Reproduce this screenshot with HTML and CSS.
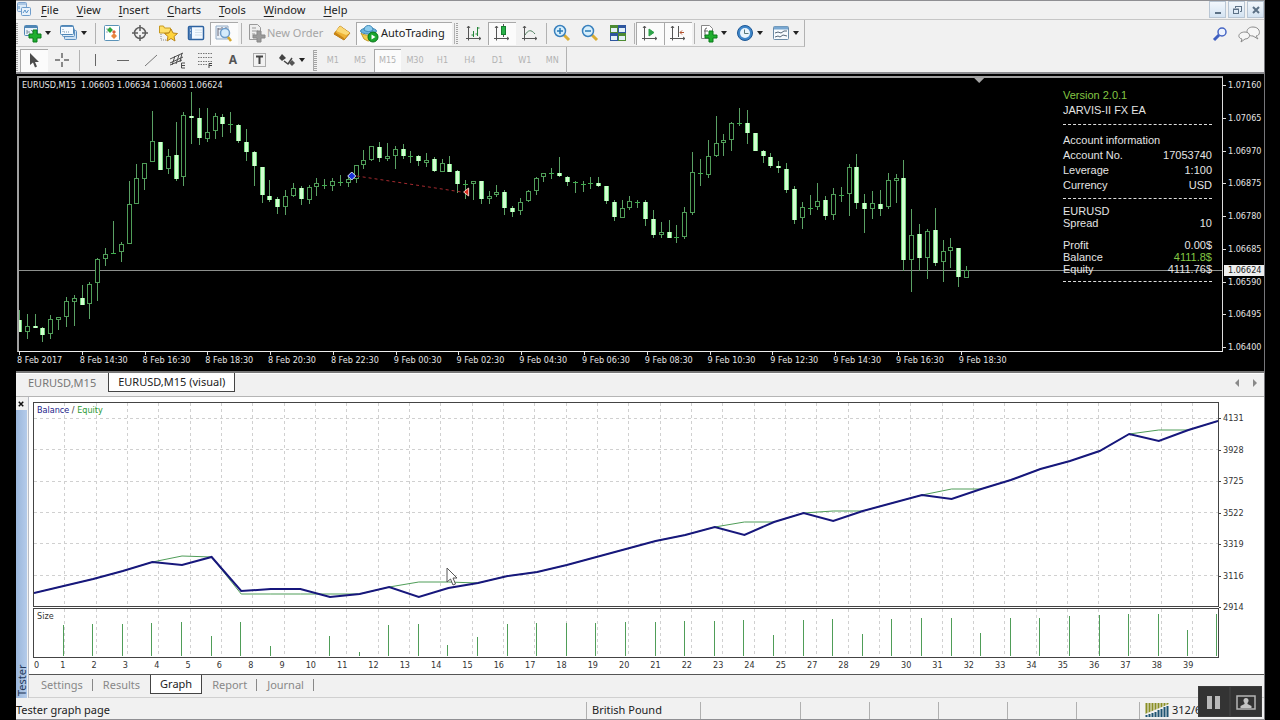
FILE: index.html
```html
<!DOCTYPE html>
<html lang="en">
<head>
<meta charset="utf-8">
<title>Strategy Tester - EURUSD,M15 (visual)</title>
<link rel="stylesheet" href="styles.css">
</head>
<body>
<div class="app">
  <header class="menubar">
    <svg class="app-icon" viewBox="0 0 16 16" aria-hidden="true"><rect x="1.500" y="1.500" width="9" height="9" rx="1" fill="#dcebf8" stroke="#7da3cf"/><path d="M2 3h8" stroke="#7da3cf"/><rect x="5.500" y="6.500" width="9" height="8" rx="1" fill="#e8f2fb" stroke="#6e9ccb"/><path d="M7 12l2-3 1.500 3 2-3M3 5v3" fill="none" stroke="#5b93c8"/></svg>
    <nav class="menus">
      <button class="menu"><u>F</u>ile</button><button class="menu"><u>V</u>iew</button><button class="menu"><u>I</u>nsert</button><button class="menu"><u>C</u>harts</button><button class="menu"><u>T</u>ools</button><button class="menu"><u>W</u>indow</button><button class="menu"><u>H</u>elp</button>
    </nav>
    <div class="window-buttons">
      <button class="winbtn" aria-label="Minimize"><svg viewBox="0 0 12 12"><path d="M3 9h6" stroke="#5c7186" stroke-width="2"/></svg></button>
      <button class="winbtn" aria-label="Restore"><svg viewBox="0 0 12 12" fill="none" stroke="#5c7186"><path d="M4.500 4V2.500h6v5H9M4 2.500h7"/><rect x="2.500" y="5.500" width="5" height="4"/><path d="M2 5h6"/></svg></button>
      <button class="winbtn" aria-label="Close"><svg viewBox="0 0 12 12"><path d="M3 3l6 6M9 3l-6 6" stroke="#5c7186" stroke-width="2"/></svg></button>
    </div>
  </header>

  <div class="toolbar">
    <div class="bar bar-main">
      <span class="grip"></span>
      <button class="tool drop" aria-label="New chart"><svg viewBox="0 0 20 20"><rect x="1.500" y="2.500" width="13" height="10" rx="1" fill="#eaf3fb" stroke="#4f86b5"/><path d="M2 4h12" stroke="#4f86b5" stroke-width="2"/><path d="M4 7v4M4 9h3M8 7l2 2" stroke="#7d8f9e" fill="none"/><path d="M10 7h4v4h4v4h-4v4h-4v-4H6v-4h4z" fill="#1fae2f" stroke="#0b7a1a"/></svg></button>
      <button class="tool drop" aria-label="Profiles"><svg viewBox="0 0 20 20"><rect x="5.500" y="7.500" width="12" height="9" rx="1" fill="#cfe2f3" stroke="#5c8fc0"/><rect x="3.500" y="5.500" width="12" height="8" rx="1" fill="#dcebf8" stroke="#5c8fc0"/><rect x="1.500" y="2.500" width="13" height="9" rx="1" fill="#f5faff" stroke="#4f86b5"/><path d="M2 3.500h12" stroke="#5c8fc0"/><path d="M4 6v3h7" stroke="#7792aa" stroke-dasharray="1 1" fill="none"/></svg></button>
      <span class="sep"></span>
      <button class="tool" aria-label="Market Watch"><svg viewBox="0 0 20 20"><rect x="2.500" y="2.500" width="15" height="15" rx="1" fill="#fff" stroke="#5b93b8"/><path d="M4 6h2M4 9h2" stroke="#9ab"/><path d="M8 4l3 3-3 3-3-3z" fill="#2ea53b"/><path d="M12 7l2 2-2 2-2-2z" fill="#d9603c"/><path d="M12 10l3 3-3 3-3-3z" fill="#e9863e"/></svg></button>
      <button class="tool" aria-label="Data Window"><svg viewBox="0 0 20 20" fill="none" stroke="#5f5f5f"><circle cx="10" cy="10" r="5.500" stroke-width="1.500"/><path d="M10 2v6M10 12v6M2 10h6M12 10h6" stroke-width="1.500"/></svg></button>
      <button class="tool" aria-label="Navigator"><svg viewBox="0 0 20 20"><path d="M1.500 9V3h4l1 2h6v5h-11z" fill="#ffe06a" stroke="#c79a1e"/><path d="M3 11v6h5" fill="none" stroke="#888" stroke-dasharray="1 1"/><path d="M13 6l2 4 4.500.5-3.500 3 1 4.500-4-2.500L9 18l1-4.500-3.500-3L11 10z" fill="#ffd43c" stroke="#bb861b"/></svg></button>
      <button class="tool" aria-label="Terminal"><svg viewBox="0 0 20 20"><rect x="2.500" y="3.500" width="15" height="13" rx="1" fill="#f3f9ff" stroke="#2d62a0" stroke-width="1.500"/><path d="M3 4h3v12H3z" fill="#5180b8"/><path d="M9 7h7M9 9.500h7M9 12h7" stroke="#d2dfea"/><path d="M4 7h1M4 10h1" stroke="#fff"/></svg></button>
      <button class="tool pressed" aria-label="Strategy Tester"><svg viewBox="0 0 20 20"><path d="M2 3h12v13H2z" fill="#eaf1f8" stroke="#92abc5"/><path d="M4 5v8M4 6h3M8 4v6M12 4v4" stroke="#667"/><circle cx="11" cy="10" r="4.500" fill="#d5ebfb" stroke="#6e9cca" stroke-width="1.500"/><path d="M14 14l3 4" stroke="#d5a62b" stroke-width="2.500"/></svg></button>
      <span class="sep"></span>
      <button class="tool labelled order" disabled><svg viewBox="0 0 20 20"><path d="M3.500 1.500h8l3 3v12h-11z" fill="#eee" stroke="#999"/><path d="M6 5h4M6 8h6M6 11h3" stroke="#999"/><path d="M11 8h4v4h4v3h-4v4h-4v-4H7v-3h4z" fill="#9a9a9a" stroke="#888"/></svg>New Order</button>
      <button class="tool" aria-label="MetaEditor"><svg viewBox="0 0 20 20"><path d="M8 3l10 7-6 7L2 11z" fill="#eeb234" stroke="#b87913"/><path d="M8 3l10 7-4 2L4 8z" fill="#fbd975"/><path d="M2 11l10 6v-2L3 9" fill="#c98516"/></svg></button>
      <button class="tool labelled auto pressed"><svg viewBox="0 0 20 20"><path d="M2 10c3 3 12 3 15-1l-3 8-5 1-4-2z" fill="#f2ce4f" stroke="#c49a27"/><ellipse cx="9.500" cy="8" rx="8" ry="3" fill="#69b2dc" stroke="#3d87b6"/><path d="M5 7c0-6 9-6 9 0-2 2-7 2-9 0z" fill="#8bcbed" stroke="#3d87b6"/><circle cx="14" cy="14" r="5" fill="#1aa52d" stroke="#087319"/><path d="M12.500 11.500l4 2.500-4 2.500z" fill="#fff"/></svg>AutoTrading</button>
      <span class="sep tight"></span>
      <span class="grip"></span>
      <button class="tool" aria-label="Bar chart"><svg viewBox="0 0 20 20" fill="none" stroke="#555"><path d="M4.500 3v14.500M2 15.500h15M3 5l1.500-2L6 5M15 14l2 1.500-2 1.500"/><path d="M9.500 8v6M7.500 12h2M13.500 4v9M13.500 5h2M11.500 11h2" stroke="#26863a"/></svg></button>
      <button class="tool pressed" aria-label="Candlesticks"><svg viewBox="0 0 20 20" fill="none" stroke="#555"><path d="M4.500 3v14.500M2 15.500h15M3 5l1.500-2L6 5M15 14l2 1.500-2 1.500M11.500 1v13"/><rect x="9.500" y="3.500" width="4" height="8" fill="#29b149" stroke="#147e2d"/></svg></button>
      <button class="tool" aria-label="Line chart"><svg viewBox="0 0 20 20" fill="none" stroke="#555"><path d="M4.500 3v14.500M2 15.500h15M3 5l1.500-2L6 5M15 14l2 1.500-2 1.500"/><path d="M5 12c3-5 6-6 10-1" stroke="#4f8060"/></svg></button>
      <span class="sep tight"></span>
      <button class="tool" aria-label="Zoom in"><svg viewBox="0 0 20 20"><path d="M12 12l5 5" stroke="#d9ad35" stroke-width="3"/><circle cx="8" cy="8" r="5.500" fill="#d7effc" stroke="#3980bd" stroke-width="1.500"/><path d="M5 8h6M8 5v6" stroke="#287ab5" stroke-width="1.500"/></svg></button>
      <button class="tool" aria-label="Zoom out"><svg viewBox="0 0 20 20"><path d="M12 12l5 5" stroke="#d9ad35" stroke-width="3"/><circle cx="8" cy="8" r="5.500" fill="#d7effc" stroke="#3980bd" stroke-width="1.500"/><path d="M5 8h6" stroke="#287ab5" stroke-width="1.500"/></svg></button>
      <button class="tool" aria-label="Tile windows"><svg viewBox="0 0 20 20"><path d="M2 2h8v8H2zM10 10h8v8h-8z" fill="#4d8b32"/><path d="M10 2h8v8h-8zM2 10h8v8H2z" fill="#2e569e"/><path d="M3 5h6v4H3zM11 5h6v4h-6zM3 13h6v4H3zM11 13h6v4h-6z" fill="#e3f1f8"/></svg></button>
      <span class="sep tight"></span>
      <button class="tool pressed" aria-label="Auto scroll"><svg viewBox="0 0 20 20" fill="none" stroke="#555"><path d="M4.500 3v14.500M2 15.500h15M3 5l1.500-2L6 5M15 14l2 1.500-2 1.500"/><path d="M9 6l5 3.500L9 13z" fill="#2ea34a" stroke="#2ea34a"/></svg></button>
      <button class="tool pressed" aria-label="Chart shift"><svg viewBox="0 0 20 20" fill="none" stroke="#555"><path d="M4.500 3v14.500M2 15.500h15M3 5l1.500-2L6 5M15 14l2 1.500-2 1.500M10.500 3v11"/><path d="M16 9.500h-4M14 7.500l-2 2 2 2" stroke="#b3532f"/></svg></button>
      <span class="sep tight"></span>
      <button class="tool drop" aria-label="Indicators"><svg viewBox="0 0 20 20"><path d="M2.500 2.500h8l3 3v10h-11z" fill="#fff" stroke="#888"/><path d="M6 13V7q0-2 2-2M5 8h4" fill="none" stroke="#666"/><path d="M10 8h4v4h4v3h-4v4h-4v-4H6v-3h4z" fill="#1fae2f" stroke="#0b7a1a"/></svg></button>
      <button class="tool drop" aria-label="Periods"><svg viewBox="0 0 20 20"><circle cx="10" cy="10" r="7.500" fill="#3f87ca" stroke="#1e5896"/><circle cx="10" cy="10" r="5" fill="#e8f4fc"/><path d="M9.500 6.500v4h4" stroke="#577" fill="none"/></svg></button>
      <button class="tool drop" aria-label="Templates"><svg viewBox="0 0 20 20"><rect x="2.500" y="3.500" width="15" height="13" rx="1" fill="#f7fbfe" stroke="#6b8ba6"/><path d="M3 5h14" stroke="#79a8d2" stroke-width="3"/><path d="M4 10l3-1 3 1 3-2 3 0M4 14l3-1 2 1 3-2 4 1" fill="none" stroke="#567"/></svg></button>
    </div>
    <div class="bar bar-lines">
      <span class="grip"></span>
      <button class="tool pressed" aria-label="Cursor"><svg viewBox="0 0 20 20"><path d="M6 3v12l3-2.500 2 5 2-1-2-4.500h4z" fill="#4c4c4c"/></svg></button>
      <button class="tool" aria-label="Crosshair"><svg viewBox="0 0 20 20"><path d="M10 3v5M10 12v5M3 10h5M12 10h5" stroke="#666" stroke-width="1.500"/></svg></button>
      <span class="sep"></span>
      <div class="draw-tools">
        <button class="tool" aria-label="Vertical line"><svg viewBox="0 0 20 20"><path d="M9.500 4v12" stroke="#666"/></svg></button>
        <button class="tool" aria-label="Horizontal line"><svg viewBox="0 0 20 20"><path d="M4 10.500h12" stroke="#666"/></svg></button>
        <button class="tool" aria-label="Trendline"><svg viewBox="0 0 20 20"><path d="M4 16L16 5" stroke="#777"/></svg></button>
        <button class="tool" aria-label="Equidistant channel"><svg viewBox="0 0 20 20" fill="none" stroke="#4e4e4e"><path d="M2 13L15 7M2 9l13-6M4 15l3-9M8 14l3-9M12 12l2-9M2 15l12-5"/><path d="M17 13h-3.500v5H17M14 15.500h3"/></svg></button>
        <button class="tool" aria-label="Fibonacci retracement"><svg viewBox="0 0 20 20" fill="none" stroke="#777"><path d="M3 3.500h14M3 7.500h14M3 11.500h14M3 14.500h9" stroke-dasharray="1.500 1"/><path d="M17 13.500h-3V18M14 15.500h3" stroke="#444"/></svg></button>
        <button class="tool glyph" aria-label="Text">A</button>
        <button class="tool" aria-label="Text label"><svg viewBox="0 0 20 20" fill="none" stroke="#666"><rect x="3.500" y="3.500" width="12" height="13" stroke-dasharray="1 1"/><path d="M6 6.500h7M9.500 6v8" stroke="#444" stroke-width="2"/></svg></button>
      </div>
      <button class="tool drop" aria-label="Arrows"><svg viewBox="0 0 20 20"><path d="M5 4l4 4-4 3-3-3z" fill="#444"/><path d="M7 11l4 3 4-6" fill="none" stroke="#444" stroke-width="1.500"/><path d="M15 10l3 3-3 3-3-3z" fill="#555"/></svg></button>
      <span class="grip wide"></span>
      <div class="periods">
        <button class="tool">M1</button><button class="tool">M5</button><button class="tool pressed">M15</button><button class="tool">M30</button><button class="tool">H1</button><button class="tool">H4</button><button class="tool">D1</button><button class="tool">W1</button><button class="tool">MN</button>
      </div>
    </div>
    <div class="toolbar-right">
      <button class="tool" aria-label="Search"><svg viewBox="0 0 20 20"><circle cx="12" cy="8" r="4" fill="#eef4ff" stroke="#4666c4" stroke-width="1.500"/><path d="M9 11l-5 5" stroke="#3f5fc1" stroke-width="3"/></svg></button>
      <button class="tool chat" aria-label="Community"><svg viewBox="0 0 24 20" fill="#f6f6f6" stroke="#8b8b8b"><path d="M16 3c8 0 8 9 3 9l2 3-5-3c-8 0-8-9 0-9z"/><path d="M8 8c6 0 6 7 0 7l-4 3 1-3c-5-1-4-7 3-7z"/></svg></button>
    </div>
  </div>

  <main class="price">
    <div class="plot price-plot">
      <svg class="canvas" id="price-chart" role="img" aria-label="EURUSD M15 candlestick chart"></svg>
      <p class="ohlc">EURUSD,M15&nbsp; 1.06603 1.06634 1.06603 1.06624</p>
      <div class="info">
        <p class="lime">Version 2.0.1</p>
        <p>JARVIS-II FX EA</p>
        <hr>
        <p>Account information</p>
        <dl>
          <div><dt>Account No.</dt><dd>17053740</dd></div>
          <div><dt>Leverage</dt><dd>1:100</dd></div>
          <div><dt>Currency</dt><dd>USD</dd></div>
        </dl>
        <hr class="second">
        <dl class="tight">
          <div><dt>EURUSD</dt></div>
          <div class="gap"><dt>Spread</dt><dd>10</dd></div>
          <div><dt>Profit</dt><dd>0.00$</dd></div>
          <div><dt>Balance</dt><dd class="lime">4111.8$</dd></div>
          <div><dt>Equity</dt><dd>4111.76$</dd></div>
        </dl>
        <hr class="last">
      </div>
    </div>
    <div class="price-axis">
      <span>1.07160</span><span>1.07065</span><span>1.06970</span><span>1.06875</span><span>1.06780</span><span>1.06685</span><span>1.06590</span><span>1.06495</span><span>1.06400</span>
      <b class="bid">1.06624</b>
    </div>
    <div class="time-axis">
      <span>8 Feb 2017</span><span>8 Feb 14:30</span><span>8 Feb 16:30</span><span>8 Feb 18:30</span><span>8 Feb 20:30</span><span>8 Feb 22:30</span><span>9 Feb 00:30</span><span>9 Feb 02:30</span><span>9 Feb 04:30</span><span>9 Feb 06:30</span><span>9 Feb 08:30</span><span>9 Feb 10:30</span><span>9 Feb 12:30</span><span>9 Feb 14:30</span><span>9 Feb 16:30</span><span>9 Feb 18:30</span>
    </div>
  </main>

  <nav class="chart-tabs">
    <button class="tab">EURUSD,M15</button><button class="tab active">EURUSD,M15 (visual)</button>
    <div class="scrollers"><button aria-label="Scroll left"><svg viewBox="0 0 8 8"><path d="M6 0v8L2 4z" fill="#8a8a8a"/></svg></button><button aria-label="Scroll right"><svg viewBox="0 0 8 8"><path d="M2 0v8l4-4z" fill="#8a8a8a"/></svg></button></div>
  </nav>

  <section class="tester">
    <aside class="side">
      <button class="close" aria-label="Close tester"><svg viewBox="0 0 8 8"><path d="M1 1l6 6M7 1L1 7" stroke="#111" stroke-width="2"/></svg></button>
      <h2 class="side-title">Tester</h2>
    </aside>
    <div class="tester-main">
      <div class="graph">
        <div class="plot balance-plot">
          <svg class="canvas" id="balance-chart" role="img" aria-label="Balance and equity graph"></svg>
          <p class="legend"><span class="navy">Balance</span> / <span class="green">Equity</span></p>
        </div>
        <div class="value-axis"><span>4131</span><span>3928</span><span>3725</span><span>3522</span><span>3319</span><span>3116</span><span>2914</span></div>
        <div class="plot size-plot">
          <svg class="canvas" id="size-chart" role="img" aria-label="Trade size"></svg>
          <p class="legend">Size</p>
        </div>
        <div class="trade-axis" id="trade-axis"></div>
      </div>
      <nav class="tester-tabs">
        <button class="ttab">Settings</button><button class="ttab">Results</button><button class="ttab active">Graph</button><button class="ttab">Report</button><button class="ttab">Journal</button>
      </nav>
    </div>
  </section>

  <footer class="status">
    <span class="cell page">Tester graph page</span>
    <span class="cell profile">British Pound</span>
    <span class="cell c1"></span><span class="cell c2"></span><span class="cell c2"></span><span class="cell c2"></span><span class="cell c2"></span><span class="cell c3"></span>
    <span class="cell traffic"><svg viewBox="0 0 24 14" aria-hidden="true"><path d="M1.500 0v13M4.500 0v13M7.500 0v13M10.500 0v13M13.500 0v13M16.500 0v13M19.500 0v13M22.500 0v13" stroke="#8a8f25" stroke-width="2"/><path d="M0 11L24 1v13H0z" fill="#f0f0f0"/><path d="M1.500 12v2M4.500 11v3M7.500 10v4M10.500 9v5M13.500 7v7M16.500 6v8M19.500 4v10M22.500 3v11" stroke="#1f5573" stroke-width="2"/></svg>312/6</span>
  </footer>
</div>

<svg class="pointer" viewBox="0 0 12 19" aria-hidden="true"><path d="M1 1v14l3.500-3 2.500 6 2.500-1L7 11h4z" fill="#fff" stroke="#555"/></svg>
<div class="recorder">
  <button aria-label="Pause"><svg viewBox="0 0 20 20"><path d="M3 4h5v13H3zM11 4h5v13h-5z" fill="#b9b9b9"/></svg></button>
  <button aria-label="Webcam"><svg viewBox="0 0 20 20"><rect x="1" y="4" width="18" height="13" fill="none" stroke="#b5b5b5" stroke-width="1.500"/><circle cx="10" cy="8.500" r="2.500" fill="#c4c4c4"/><path d="M8.500 10h3v2l4 2v2h-11v-2l4-2z" fill="#c4c4c4"/></svg></button>
</div>
<script src="charts.js"></script>
</body>
</html>
```
FILE: styles.css
```css
* { box-sizing: border-box; }
body {
  margin: 0;
  min-height: 100vh;
  padding: 0 15px 0 16px;
  background: #000;
  color: #222;
  font: 11px/16px "Noto Sans", "Open Sans", sans-serif;
}
p, dl, dd, h2 { margin: 0; font-weight: normal; }
button { margin: 0; padding: 0; border: 0; background: none; color: inherit; font: inherit; }
svg { display: block; }

.app {
  min-height: 100vh;
  display: flex;
  flex-direction: column;
  background: #f1f1f1;
  border-top: 1px solid #8f8f93;
  border-right: 1px solid #77777b;
  border-bottom: 1px solid #8f8f93;
}

/* menu */
.menubar { display: flex; align-items: stretch; height: 19px; border-bottom: 1px solid #c6c6c6; }
.app-icon { width: 16px; height: 16px; }
.menus { display: flex; flex: 1; }
.menu { padding: 0 9px; }
.menu u { text-underline-offset: 2px; }
.window-buttons { display: flex; gap: 2px; padding-bottom: 1px; }
.winbtn { width: 17px; display: grid; place-items: center; border: 1px solid #b9c6d4; background: linear-gradient(#f2f7fc, #d4e3f2); }
.winbtn svg { width: 12px; height: 12px; }

/* toolbars */
.toolbar { position: relative; height: 54px; border-bottom: 2px solid #8b8b8f; }
.bar { display: flex; align-items: center; width: max-content; height: 27px; border-right: 1px solid #b2b2b2; border-bottom: 1px solid #c2c2c2; }
.bar-lines { height: 26px; border-bottom: 0; }
.grip { width: 4px; height: 21px; flex: none; background: repeating-linear-gradient(#a4a4a4 0 1px, #f1f1f1 1px 2px); border-right: 2px solid #f1f1f1; }
.grip.wide { width: 6px; margin-left: 3px; border-left: 1px solid #aaa; }
.sep { width: 6px; height: 21px; flex: none; background: linear-gradient(#b2b2b2, #b2b2b2) 50% 0 / 1px 100% no-repeat; }
.sep.tight { width: 4px; }
.tool { width: 28px; height: 23px; flex: none; display: flex; align-items: center; justify-content: center; }
.tool svg { width: 20px; height: 20px; flex: none; }
.tool.pressed { background: #fbfbfb; box-shadow: inset 1px 1px #a9a9a9; }
.tool.drop { width: 36px; padding-left: 3px; justify-content: flex-start; }
.tool.drop::after { content: ""; margin-left: 2px; border: 3px solid transparent; border-top: 4px solid #222; border-bottom: 0; }
.tool.labelled { justify-content: flex-start; gap: 1px; white-space: nowrap; }
.order { width: 84px; padding-left: 2px; color: #a5a5a5; }
.auto { width: 96px; padding-left: 3px; }
.auto.labelled { gap: 2px; }
.draw-tools { display: flex; width: 192px; }
.draw-tools .tool { flex: 1; }
.glyph { color: #555; font-size: 12px; font-weight: bold; }
.periods { display: flex; width: 247px; }
.periods .tool { flex: 1; color: #b3b3b3; font: 9px/12px "DejaVu Sans Condensed", sans-serif; }
.toolbar-right { position: absolute; right: 0; top: 2px; display: flex; }
.toolbar-right .chat { width: 30px; }
.toolbar-right .chat svg { width: 24px; }

/* price chart */
.price {
  flex: 1;
  min-height: 240px;
  display: grid;
  grid-template: 1fr 19px / 1fr 41px;
  padding-top: 2px;
  background: #000;
  color: #e4e4e4;
  font: 9px/14px "DejaVu Sans Condensed", "Noto Sans", sans-serif;
}
.plot { position: relative; min-width: 0; }
.canvas { position: absolute; inset: 0; width: 100%; height: 100%; }
.price-plot { margin-left: 1px; border: 2px solid #a0a0a0; border-right: 1px solid #ddd; border-bottom: 1px solid #eee; }
.ohlc { position: absolute; left: 3px; top: 0; }
.price-axis { grid-row: 1 / 3; grid-column: 2; position: relative; display: flex; flex-direction: column; justify-content: space-between; padding: 2px 0 17px; }
.price-axis span { padding-left: 5px; position: relative; }
.price-axis span::before { content: ""; position: absolute; left: 0; top: 7px; width: 3px; height: 1px; background: #ddd; }
.bid { position: absolute; left: 1px; right: 0; top: 64%; padding-left: 4px; background: #eee; color: #222; font-weight: normal; line-height: 11px; }
.time-axis { grid-row: 2; grid-column: 1; display: grid; grid-template-columns: repeat(16, 100fr) 321fr; padding-left: 1px; }
.time-axis span { position: relative; white-space: nowrap; padding-top: 1px; }
.time-axis span::before { content: ""; position: absolute; left: 2px; top: 0; width: 1px; height: 3px; background: #ddd; }

.info { position: absolute; right: 10px; top: 10px; width: 149px; font: 11px/15px "Liberation Sans", Arial, sans-serif; }
.info hr { height: 0; margin: 6px 0 8px; border: 0; border-top: 1px dashed #ddd; }
.info .second { margin: 5px 0 6px; }
.info .last { margin: 6px 0 0; }
.info dl div { display: flex; justify-content: space-between; }
.info .tight { line-height: 12px; }
.info .tight .gap { margin-bottom: 10px; }
.info .lime { color: #84c744; }

/* chart tabs */
.chart-tabs { display: flex; height: 26px; align-items: flex-start; border-top: 2px solid #777; border-bottom: 1px solid #b5b5b5; box-shadow: inset 0 1px #fff; }
.tab { height: 19px; padding: 0 12px; color: #777; }
.tab.active { background: #fff; color: #222; padding: 0 9px; border: 1px solid #444; border-top: 0; }
.scrollers { margin-left: auto; display: flex; gap: 10px; padding: 6px 5px; }
.scrollers svg { width: 8px; height: 8px; }

/* tester */
.tester { display: flex; background: #fff; }
.side { width: 13px; flex: none; display: flex; flex-direction: column; border-right: 1px solid #b9bcc4; background: #f1f1f1; }
.close { height: 13px; display: grid; place-items: center; width: 9px; }
.close svg { width: 6px; height: 6px; }
.side-title { flex: 1; width: 11px; background: linear-gradient(90deg, #b4cbea, #9ab6db); writing-mode: vertical-rl; transform: rotate(180deg); font-size: 11px; line-height: 11px; color: #24395a; padding-top: 2px; }
.tester-main { flex: 1; min-width: 0; }
.graph {
  display: grid;
  grid-template: 206px 50px 16px / 1fr 45px;
  padding: 5px 0 0 4px;
  background: #fff;
  border-bottom: 1px solid #555;
  color: #333;
  font: 9px/14px "DejaVu Sans Condensed", "Noto Sans", sans-serif;
}
.graph .plot { grid-column: 1; border: 1px solid #444; }
.graph .balance-plot { margin-bottom: 1px; }
.legend { position: absolute; left: 3px; top: 0; }
.navy { color: #1c1c8a; }
.green { color: #2c9a35; }
.value-axis { grid-column: 2; grid-row: 1; display: flex; flex-direction: column; justify-content: space-between; margin: 9px 0 -6px; }
.value-axis span { position: relative; padding-left: 4px; }
.value-axis span::before { content: ""; position: absolute; left: 0; top: 7px; width: 2px; height: 1px; background: #444; }
.trade-axis { grid-column: 1; display: grid; grid-template-columns: repeat(37, 94fr) 74fr; padding: 0 1px; }
.trade-axis span { display: flex; justify-content: flex-end; }
.trade-axis .first { justify-content: space-between; }
.tester-tabs { display: flex; height: 23px; padding-left: 2px; align-items: flex-start; background: #f1f1f1; border-bottom: 1px solid #d0d0d0; }
.ttab { position: relative; height: 19px; padding: 0 10px; color: #888; }
.ttab:not(.active)::after { content: ""; position: absolute; right: 0; top: 4px; height: 12px; width: 1px; background: #888; }
.ttab:has(+ .active)::after { display: none; }
.ttab.active { padding: 0 9px; border: 1px solid #444; border-top: 0; background: #fff; color: #222; }

/* status bar */
.status { display: flex; height: 21px; padding-top: 4px; overflow: hidden; white-space: nowrap; }
.cell { flex: none; height: 17px; padding-left: 5px; border-left: 1px solid #b0b0b0; }
.cell.page { flex: 1; padding: 0; border: 0; }
.profile { width: 114px; }
.c1 { width: 100px; }
.c2 { width: 69px; }
.c3 { width: 63px; }
.traffic { width: 125px; display: flex; gap: 3px; }
.traffic svg { width: 24px; height: 14px; margin-top: 1px; }

/* overlays */
.pointer { position: absolute; left: 446px; top: 567px; width: 12px; height: 19px; }
.recorder { position: fixed; right: 18px; bottom: 3px; display: flex; background: #333; }
.recorder button { width: 32px; height: 31px; display: grid; place-items: center; border: 1px solid #3d3d3d; }
.recorder svg { width: 20px; height: 20px; }
```
FILE: charts.js
```js
// Candles: [high, body top, body bottom, low, kind]; f = falling, h = rising, d = doji.
// Levels run downwards on a scale of 822 units, starting at -9.
const candles = `690,720,757,757,f 703,739,757,778,h 703,738,744,744,f 740,745,766,786,f 706,718,763,778,h 712,712,718,750,h
650,664,712,742,h 646,653,665,738,h 614,654,675,675,f 606,612,673,716,h 533,538,609,662,h 503,523,538,557,h 423,519,521,523,d
485,491,517,545,h 303,371,493,493,h 252,295,371,371,h 248,248,296,330,h 92,182,247,247,h 185,185,269,269,f 208,227,268,281,h
127,224,296,302,f 95,106,292,319,h 36,107,114,193,f 85,113,175,196,f 85,157,176,185,h 98,109,154,176,h 102,110,133,170,f
95,131,133,160,d 131,134,184,188,f 148,186,215,243,f 212,216,259,317,f 260,260,346,369,f 300,348,359,365,f 352,357,380,401,f
330,347,381,404,h 309,324,348,352,h 318,325,356,374,f 314,322,361,372,h 295,309,322,348,h 297,314,316,328,d 295,304,317,333,h
285,306,308,318,d 290,297,308,320,h 254,254,297,309,h 211,239,255,266,h 198,198,240,242,h 186,200,234,245,f 188,228,235,243,h
197,207,229,266,h 192,207,229,238,f 212,228,230,250,d 225,229,243,258,f 218,240,245,260,h 230,238,273,276,f 236,249,275,277,h
227,251,276,277,f 270,273,312,338,f 300,311,313,358,d 304,304,311,360,h 302,304,357,371,f 333,347,358,371,h 316,337,346,352,h
330,336,384,404,f 378,384,395,412,f 353,365,394,404,h 331,333,364,366,h 290,295,333,346,h 278,278,292,305,h 265,278,280,298,d
232,279,289,292,f 287,290,306,319,f 303,306,308,338,d 303,311,313,337,d 292,310,312,328,d 292,309,318,320,f 317,319,363,371,f
360,366,412,424,f 360,383,413,413,h 348,364,383,390,h 360,366,368,384,d 360,366,418,438,f 391,418,466,475,f 427,457,466,474,h
421,457,474,475,f 436,471,473,490,d 382,397,472,477,h 215,277,399,406,h 236,279,282,318,d 180,229,285,293,h 107,188,228,230,h
162,181,190,228,h 127,130,181,213,h 83,129,131,138,d 91,128,160,193,f 160,160,213,213,f 210,213,228,248,f 218,230,257,264,f
243,257,265,278,f 248,268,329,338,f 318,327,419,431,f 367,381,415,446,h 346,383,385,405,d 308,363,381,390,h 347,359,407,419,f
325,342,406,420,h 320,344,346,367,d 253,260,343,407,h 223,260,370,388,f 343,368,388,459,f 334,368,388,416,h 329,371,386,407,f
280,301,382,387,h 281,294,304,368,h 241,293,539,574,f 388,466,541,636,h 432,462,533,574,f 446,453,533,597,h 385,451,548,558,f
481,512,547,605,h 473,500,513,563,h 503,503,592,622,f 559,571,593,593,h`.trim().split(/\s+/).map(c => c.split(','));

// Graph levels measured down from the top of a 203-unit panel.
const balance = [190, 183, 176, 168, 159, 162, 154, 188, 186, 186, 194, 191, 184, 194, 185, 180, 173, 169, 162, 154, 146, 138, 132, 124, 132, 119, 110, 118, 108, 100, 92, 96, 86, 77, 66, 58, 48, 31, 38, 27, 18];
const equityOnly = { 5: 153, 7: 191, 8: 191, 9: 191, 10: 191, 11: 191, 13: 179, 14: 179, 24: 119, 25: 119, 27: 108, 31: 86, 38: 27 };
const equity = balance.map((v, i) => equityOnly[i] ?? v);
const sizes = [0, 31, 32, 32, 33, 34, 20, 34, 10, 0, 20, 4, 31, 32, 11, 19, 32, 33, 33, 33, 34, 34, 35, 35, 36, 21, 36, 37, 22, 37, 38, 38, 23, 38, 38, 40, 41, 42, 42, 26, 42];

const line = (x1, y1, x2, y2, attrs) => `<path d="M${x1} ${y1}L${x2} ${y2}" fill="none" ${attrs}/>`;
const size = svg => [svg.clientWidth, svg.clientHeight];

function drawPrice() {
  const svg = document.getElementById('price-chart');
  const [w, h] = size(svg);
  const X = v => v * w / 1204;
  const Y = v => Math.round((Number(v) + 6) * h / 819);
  let out = line(0, Y(571) + .5, w, Y(571) + .5, 'stroke="#8c8f8c"');
  candles.forEach(([hi, top, bottom, low, kind], i) => {
    const x = Math.round(X(i * 47 / 6));
    const c = x + .5, t = Y(top), b = Math.max(Y(bottom), t + 1);
    out += line(c, Y(hi), c, t, 'stroke="#5aa164"') + line(c, b, c, Y(low), 'stroke="#5aa164"');
    if (kind === 'd') out += `<rect x="${x - 2}" y="${t}" width="5" height="1" fill="#3fae4e"/>`;
    else if (kind === 'f') out += `<rect x="${x - 2}" y="${t}" width="5" height="${b - t}" fill="#d2ffd0"/><path d="M${x - 1.5} ${t}V${b}M${x + 2.5} ${t}V${b}" stroke="#6fd27a"/>`;
    else out += `<rect x="${x - 1.5}" y="${t + .5}" width="4" height="${Math.max(b - t - 1, 2)}" fill="#000" stroke="#4f9d58"/>`;
  });
  const bx = X(333), by = Y(289), rx = X(447), ry = Y(336);
  out += line(bx + 5, by, rx - 4, ry, 'stroke="#a52a2f" stroke-dasharray="3 3"');
  out += `<path d="M${bx} ${by - 4}l4 4-4 4-4-4z" fill="#1830d8" stroke="#dde4ff"/>`;
  out += `<path d="M${rx + 3} ${ry - 4}v8l-5-4z" fill="#d92e20" stroke="#f2c9c0"/>`;
  out += `<path d="M${X(956)} 0h10l-5 5z" fill="#a6a6a6"/>`;
  svg.innerHTML = out;
}

function gridLines(w, h) {
  let out = '';
  for (let i = 1; i <= 37; i++) {
    const x = Math.round(i * 94 / 3552 * w) - .5;
    out += line(x, 0, x, h, 'stroke="#d0d0d0" stroke-dasharray="3 3"');
  }
  return out;
}

function drawBalance() {
  const svg = document.getElementById('balance-chart');
  const [w, h] = size(svg);
  const points = list => list.map((v, i) => `${i * w / 40},${v * h / 203}`).join(' ');
  let out = gridLines(w, h);
  for (let i = 0; i < 6; i++) {
    const y = Math.round((15 + i * 31.3) * h / 203) + .5;
    out += line(0, y, w, y, 'stroke="#d0d0d0" stroke-dasharray="3 3"');
  }
  out += `<polyline points="${points(equity)}" fill="none" stroke="#4f9d58"/>`;
  out += `<polyline points="${points(balance)}" fill="none" stroke="#17177c" stroke-width="2"/>`;
  svg.innerHTML = out;
}

function drawSizes() {
  const svg = document.getElementById('size-chart');
  const [w, h] = size(svg);
  let out = gridLines(w, h);
  sizes.forEach((v, i) => {
    const x = Math.min(Math.round(i * w / 40), w - 1) - .5;
    if (v) out += line(x, h - 1, x, h - 1 - v * h / 48, 'stroke="#4f9d58"');
  });
  svg.innerHTML = out;
}

const trades = Array.from({ length: 40 }, (_, i) => i).filter(n => n !== 0 && n !== 7 && n !== 26);
document.getElementById('trade-axis').innerHTML = trades
  .map((n, i) => i ? `<span>${n}</span>` : `<span class="first"><span>0</span><span>${n}</span></span>`).join('');

function draw() { drawPrice(); drawBalance(); drawSizes(); }
draw();
window.addEventListener('resize', draw);
```
